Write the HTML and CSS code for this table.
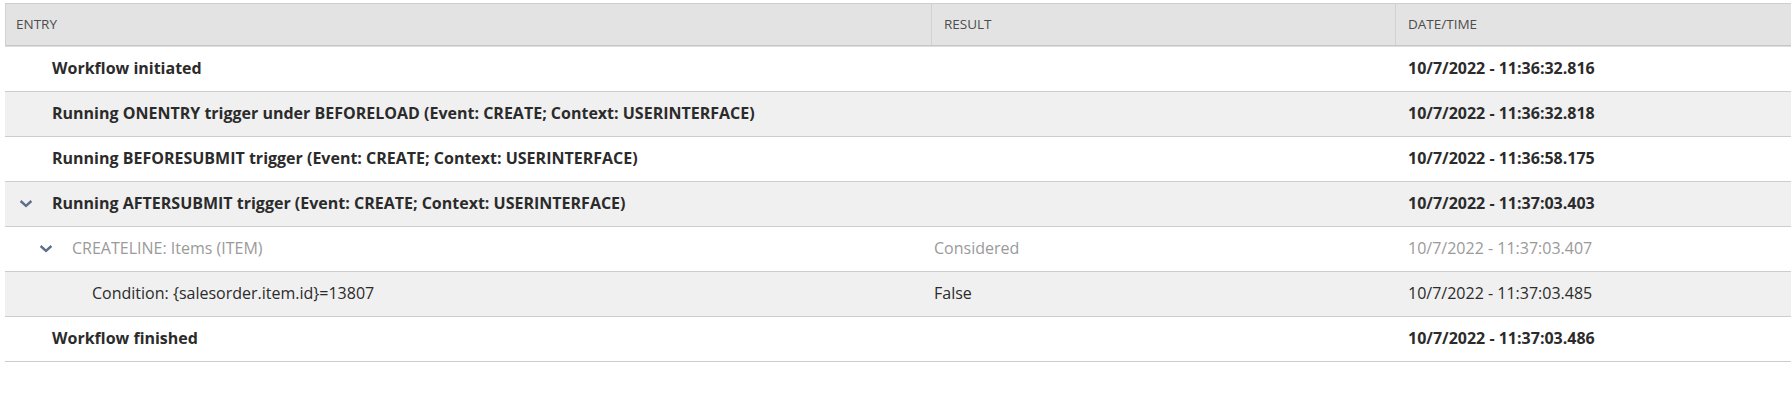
FILE: index.html
```html
<!DOCTYPE html>
<html>
<head>
<meta charset="utf-8">
<link rel="stylesheet" href="styles.css">
</head>
<body>
<div class="log">
  <div class="head">
    <div class="hc c-entry">ENTRY</div>
    <div class="hc c-result">RESULT</div>
    <div class="hc c-date">DATE/TIME</div>
  </div>
  <div class="row bold">
    <div class="cell c-entry lvl0"><span class="tw"></span>Workflow initiated</div>
    <div class="cell c-result"></div>
    <div class="cell c-date">10/7/2022 - 11:36:32.816</div>
  </div>
  <div class="row bold alt">
    <div class="cell c-entry lvl0"><span class="tw"></span>Running ONENTRY trigger under BEFORELOAD (Event: CREATE; Context: USERINTERFACE)</div>
    <div class="cell c-result"></div>
    <div class="cell c-date">10/7/2022 - 11:36:32.818</div>
  </div>
  <div class="row bold">
    <div class="cell c-entry lvl0"><span class="tw"></span>Running BEFORESUBMIT trigger (Event: CREATE; Context: USERINTERFACE)</div>
    <div class="cell c-result"></div>
    <div class="cell c-date">10/7/2022 - 11:36:58.175</div>
  </div>
  <div class="row bold alt">
    <div class="cell c-entry lvl0"><span class="tw"><svg width="14" height="9" viewBox="0 0 14 9"><path d="M1.6 2 L7 6.8 L12.4 2" fill="none" stroke="#5e6f8a" stroke-width="2.4"/></svg></span>Running AFTERSUBMIT trigger (Event: CREATE; Context: USERINTERFACE)</div>
    <div class="cell c-result"></div>
    <div class="cell c-date">10/7/2022 - 11:37:03.403</div>
  </div>
  <div class="row muted">
    <div class="cell c-entry lvl1"><span class="tw"><svg width="14" height="9" viewBox="0 0 14 9"><path d="M1.6 2 L7 6.8 L12.4 2" fill="none" stroke="#5e6f8a" stroke-width="2.4"/></svg></span>CREATELINE: Items (ITEM)</div>
    <div class="cell c-result">Considered</div>
    <div class="cell c-date">10/7/2022 - 11:37:03.407</div>
  </div>
  <div class="row alt">
    <div class="cell c-entry lvl2"><span class="tw"></span>Condition: {salesorder.item.id}=13807</div>
    <div class="cell c-result">False</div>
    <div class="cell c-date">10/7/2022 - 11:37:03.485</div>
  </div>
  <div class="row bold">
    <div class="cell c-entry lvl0"><span class="tw"></span>Workflow finished</div>
    <div class="cell c-result"></div>
    <div class="cell c-date">10/7/2022 - 11:37:03.486</div>
  </div>
</div>
</body>
</html>
```
FILE: styles.css
```css
html, body {
  margin: 0;
  padding: 0;
  background: #ffffff;
  overflow: hidden;
}
body {
  padding: 3px 0 0 5px;
  font-family: "Open Sans", "Liberation Sans", sans-serif;
  color: #2b2b2b;
}
.log {
  width: 1800px;
}
.head {
  display: flex;
  height: 41px;
  background: #e3e3e3;
  border-top: 1px solid #cfcfcf;
  border-left: 1px solid #d2d2d2;
  border-bottom: 1px solid #c6c6c6;
  box-shadow: 0 1px 0 #dedede;
  margin-bottom: 1px;
}
.hc {
  display: flex;
  align-items: center;
  font-size: 13.5px;
  color: #4d4d4d;
  padding-left: 10px;
  padding-bottom: 2px;
  box-sizing: border-box;
}
.hc + .hc {
  border-left: 1px solid #d2d2d2;
  padding-left: 12px;
}
.c-entry { width: 925px; flex: none; }
.c-result { width: 464px; flex: none; }
.c-date { flex: 1; }
.row {
  display: flex;
  height: 44px;
  border-bottom: 1px solid #cdcdcd;
  font-size: 16px;
}
.row.alt { background: #f0f0f0; }
.cell {
  display: flex;
  align-items: center;
  box-sizing: border-box;
  white-space: nowrap;
  padding-bottom: 2px;
}
.row .c-result { padding-left: 4px; }
.row .c-date { padding-left: 14px; }
.bold { font-weight: 700; color: #2b2b2b; }
.muted { color: #9a9a9a; }
.tw {
  display: inline-flex;
  width: 33px;
  flex: none;
  align-items: center;
}
.tw svg { display: block; }
.row .c-entry.lvl0 { padding-left: 14px; }
.row .c-entry.lvl1 { padding-left: 34px; }
.row .c-entry.lvl2 { padding-left: 54px; }
```
